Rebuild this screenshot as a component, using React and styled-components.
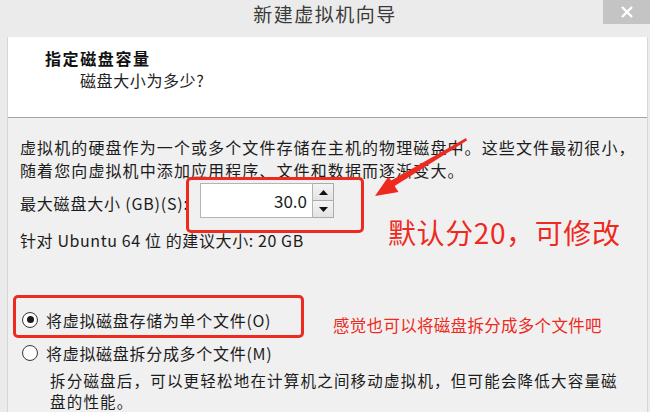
import * as React from "react"
import styled, { createGlobalStyle } from "styled-components"

const GlobalStyle = createGlobalStyle`
  html, body {
    margin: 0;
    padding: 0;
    background: #ebebeb;
  }
  body {
    font-family: "Noto Sans CJK SC", "Noto Sans", sans-serif;
    color: #1c1c1c;
  }
`

const App = () => {
  return (
    <Window>
      <GlobalStyle />
      <TitleBar>
        <span />
        <Title>新建虚拟机向导</Title>
        <CloseButton aria-label="关闭">
          <svg width="12" height="12" viewBox="0 0 12 12">
            <path d="M1 1 L11 11 M11 1 L1 11" stroke="#fff" strokeWidth="2.4" />
          </svg>
        </CloseButton>
      </TitleBar>

      <Body>
        <Header>
          <HeaderTitle>指定磁盘容量</HeaderTitle>
          <HeaderSub>磁盘大小为多少?</HeaderSub>
        </Header>

        <Content>
          <Paragraph>
            虚拟机的硬盘作为一个或多个文件存储在主机的物理磁盘中。这些文件最初很小，
            <br />
            随着您向虚拟机中添加应用程序、文件和数据而逐渐变大。
          </Paragraph>

          <FieldRow>
            <Label>最大磁盘大小 (GB)(S):</Label>
            <Spin>
              <SpinInput defaultValue="30.0" />
              <SpinButtons>
                <SpinButton>
                  <svg width="9" height="5" viewBox="0 0 9 5">
                    <polygon points="4.5,0 9,5 0,5" fill="#111" />
                  </svg>
                </SpinButton>
                <SpinButton>
                  <svg width="9" height="5" viewBox="0 0 9 5">
                    <polygon points="0,0 9,0 4.5,5" fill="#111" />
                  </svg>
                </SpinButton>
              </SpinButtons>
              <RedFrame $inset="-6px -30px -15px -14px" />
            </Spin>
          </FieldRow>

          <Recommend>针对 Ubuntu 64 位 的建议大小: 20 GB</Recommend>

          <Options>
            <Option>
              <Radio $checked />
              <span>将虚拟磁盘存储为单个文件(O)</span>
              <RedFrame $inset="-9px -33px -3px -7px" />
            </Option>
            <Option>
              <Radio />
              <span>将虚拟磁盘拆分成多个文件(M)</span>
            </Option>
            <OptionNote>
              <div>拆分磁盘后，可以更轻松地在计算机之间移动虚拟机，但可能会降低大容量磁</div>
              <div>盘的性能。</div>
            </OptionNote>
          </Options>
        </Content>
      </Body>

      <Note $x={388} $y={214} $size={28} $ls={0.6}>默认分20，可修改</Note>
      <Note $x={333} $y={315} $size={16.5} $ls={0.3}>感觉也可以将磁盘拆分成多个文件吧</Note>

      <Arrow width="650" height="412" viewBox="0 0 650 412">
        <polygon points="466,138 467,140.5 393,187 389.5,181.5" fill="#ee2a1f" />
        <polygon points="375,196 388.5,176.5 398.5,192" fill="#ee2a1f" />
      </Arrow>
    </Window>
  )
}

const Window = styled.div`
  position: relative;
  width: 650px;
  height: 412px;
  overflow: hidden;
  background: #ebebeb;
`

const TitleBar = styled.div`
  display: grid;
  grid-template-columns: 1fr auto 1fr;
  align-items: start;
  height: 37px;
`

const Title = styled.div`
  font-size: 19px;
  line-height: 28px;
  color: #3a3a3a;
  letter-spacing: 1.5px;
`

const CloseButton = styled.button`
  justify-self: end;
  width: 47px;
  height: 24px;
  border: 0;
  padding: 0;
  background: #c4c4c4;
  display: flex;
  align-items: center;
  justify-content: center;
`

const Body = styled.div`
  margin: 0 2px 0 7px;
  border-left: 1px solid #d6d6d6;
  border-right: 1px solid #d6d6d6;
  height: 375px;
  background: #f0f0f0;
`

const Header = styled.div`
  height: 70px;
  padding: 10px 0 0 37px;
  background: #fff;
  border-bottom: 1px solid #a3a3a3;
`

const HeaderTitle = styled.div`
  font-size: 16px;
  font-weight: 700;
  line-height: 22px;
  letter-spacing: 1.6px;
  color: #111;
`

const HeaderSub = styled.div`
  padding-left: 35px;
  font-size: 16px;
  line-height: 22px;
  letter-spacing: 0.6px;
  color: #222;
`

const Content = styled.div`
  padding: 18px 4px 0 12px;
  font-size: 16px;
  letter-spacing: 0.6px;
`

const Paragraph = styled.p`
  margin: 0;
  line-height: 23px;
  letter-spacing: 1.1px;
  white-space: nowrap;
`

const FieldRow = styled.div`
  display: flex;
  align-items: center;
  margin-top: 1px;
  height: 35px;
`

const Label = styled.div`
  width: 180px;
  padding-top: 4px;
  white-space: nowrap;
  letter-spacing: 0.8px;
`

const Spin = styled.div`
  position: relative;
  display: flex;
  height: 35px;
`

const SpinInput = styled.input`
  box-sizing: border-box;
  width: 113px;
  height: 35px;
  border: 1px solid #b4b4b4;
  background: #fff;
  padding: 0 5px 0 0;
  text-align: right;
  font-family: "Noto Sans CJK SC", "Noto Sans", sans-serif;
  font-size: 17px;
  color: #1a1a1a;
  outline: none;
`

const SpinButtons = styled.div`
  display: flex;
  flex-direction: column;
  width: 21px;
`

const SpinButton = styled.div`
  flex: 1;
  display: flex;
  align-items: center;
  justify-content: center;
  border: 1px solid #acacac;
  border-left: 0;
  background: linear-gradient(#f4f4f4, #e3e3e3);

  & + & {
    border-top: 0;
  }
`

const RedFrame = styled.div`
  position: absolute;
  inset: ${p => p.$inset};
  border: 3px solid #ee2a1f;
  border-radius: 5px;
  pointer-events: none;
`

const Recommend = styled.div`
  margin-top: 11px;
  line-height: 22px;
`

const Options = styled.div`
  display: flex;
  flex-direction: column;
  align-items: flex-start;
  gap: 2px;
  margin-top: 53px;
`

const Option = styled.label`
  position: relative;
  display: inline-flex;
  align-items: center;
  gap: 8px;
  height: 31px;
  padding-left: 2px;
  letter-spacing: 0.7px;
`

const Radio = styled.span`
  box-sizing: border-box;
  width: 16px;
  height: 16px;
  border-radius: 50%;
  border: 1px solid #3a3a3a;
  background: radial-gradient(circle, #fff 55%, #e6e6e6 100%);
  display: flex;
  align-items: center;
  justify-content: center;

  &::after {
    content: "";
    width: 7px;
    height: 7px;
    border-radius: 50%;
    background: #1a1a1a;
    display: ${p => (p.$checked ? "block" : "none")};
  }
`

const OptionNote = styled.div`
  margin-top: 0;
  padding-left: 30px;
  font-size: 15.5px;
  line-height: 21px;
  letter-spacing: 1.2px;
  white-space: nowrap;
`

const Note = styled.div`
  position: absolute;
  left: ${p => p.$x}px;
  top: ${p => p.$y}px;
  font-size: ${p => p.$size}px;
  letter-spacing: ${p => p.$ls}px;
  line-height: 1.3;
  color: #ee2a1f;
  white-space: nowrap;
`

const Arrow = styled.svg`
  position: absolute;
  left: 0;
  top: 0;
  pointer-events: none;
`

export default App
